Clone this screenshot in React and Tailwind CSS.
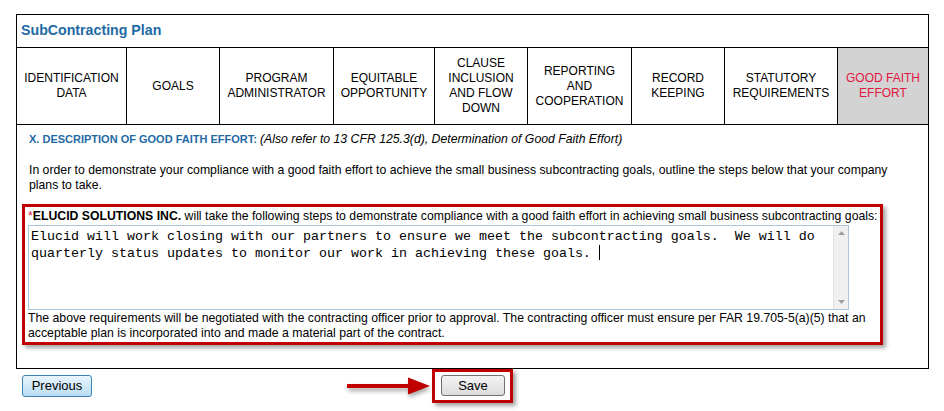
import React from 'react';

const tabs = [
  { label: ['IDENTIFICATION', 'DATA'], w: 'w-[110px]' },
  { label: ['GOALS'], w: 'w-[93px]' },
  { label: ['PROGRAM', 'ADMINISTRATOR'], w: 'w-[114px]' },
  { label: ['EQUITABLE', 'OPPORTUNITY'], w: 'w-[101px]' },
  { label: ['CLAUSE', 'INCLUSION', 'AND FLOW', 'DOWN'], w: 'w-[93px]' },
  { label: ['REPORTING', 'AND', 'COOPERATION'], w: 'w-[104px]' },
  { label: ['RECORD', 'KEEPING'], w: 'w-[93px]' },
  { label: ['STATUTORY', 'REQUIREMENTS'], w: 'w-[113px]' },
  { label: ['GOOD FAITH', 'EFFORT'], w: 'w-[90px]', active: true },
];

// fake scrollbar for the read-only text box
const ScrollBar = () => (
  <div className="w-[15px] h-full bg-[#f0f0f0] border-l border-[#e4e4e4] flex flex-col justify-between items-center py-[5px]">
    <svg width="7" height="4" viewBox="0 0 7 4"><path d="M0 4 L3.5 0 L7 4 Z" fill="#a0a0a0" /></svg>
    <svg width="7" height="4" viewBox="0 0 7 4"><path d="M0 0 L3.5 4 L7 0 Z" fill="#a0a0a0" /></svg>
  </div>
);

const Arrow = () => (
  <svg width="86" height="22" viewBox="0 0 86 22" className="drop-shadow-[1px_3px_2px_rgba(0,0,0,0.35)]">
    <rect x="0" y="9" width="64" height="4" fill="#c00000" />
    <path d="M61 2.5 L83 11 L61 19.5 Z" fill="#c00000" />
  </svg>
);

export default function App() {
  return (
    <div className="w-[944px] h-[411px] bg-white font-['Liberation_Sans',Arial,sans-serif] text-[12px] text-black overflow-hidden">
      <div className="ml-[16px] pt-[14px]">
        <div className="w-[913px] border border-black">
          {/* title */}
          <div className="h-[32px] flex items-center pl-[4px] text-[14.2px] font-bold text-[#1f6aa5]">
            SubContracting Plan
          </div>

          {/* tabs */}
          <div className="flex h-[77px] border-t border-black">
            {tabs.map((t, i) => (
              <div
                key={i}
                className={`${t.w} flex flex-col items-center justify-center text-center leading-[15px] ${
                  i < tabs.length - 1 ? 'border-r border-black' : ''
                } ${t.active ? 'bg-[#d3d3d3] text-[#e2173f]' : 'text-black'}`}
              >
                {t.label.map((l) => (
                  <span key={l}>{l}</span>
                ))}
              </div>
            ))}
          </div>

          {/* content */}
          <div className="border-t border-black pt-[7px] pb-[23px] leading-[15px] text-[12.25px]">
            <div className="pl-[12px]">
              <span className="text-[11px] font-bold text-[#1f6aa5]">X. DESCRIPTION OF GOOD FAITH EFFORT: </span>
              <span className="italic">(Also refer to 13 CFR 125.3(d), Determination of Good Faith Effort)</span>
            </div>
            <p className="pl-[12px] mt-[16px]">
              In order to demonstrate your compliance with a good faith effort to achieve the small business subcontracting goals, outline the steps below that your company
              <br />
              plans to take.
            </p>

            <div className="ml-[5px] mt-[11px] w-[861px] border-[3px] border-[#c00000] shadow-[3px_3px_4px_rgba(0,0,0,0.35)] pt-[2px] pl-[3px]">
              <div className="whitespace-nowrap">
                <span className="text-[#e2173f]">*</span>
                <span className="font-bold">ELUCID SOLUTIONS INC.</span> will take the following steps to demonstrate compliance with a good faith effort in achieving small business subcontracting goals:
              </div>
              <div className="mt-[1px] w-[821px] h-[85px] border border-[#a9c6de] flex">
                <div className="flex-1 pt-[3px] pl-[2px] font-['Liberation_Mono','Courier_New',monospace] text-[13.33px] leading-[16px] whitespace-pre">
                  Elucid will work closing with our partners to ensure we meet the subcontracting goals.  We will do
                  {'\n'}quarterly status updates to monitor our work in achieving these goals. <span className="inline-block w-px h-[15px] bg-black align-[-3px]" />
                </div>
                <ScrollBar />
              </div>
              <p className="mt-[1px] pb-[1px]">
                The above requirements will be negotiated with the contracting officer prior to approval. The contracting officer must ensure per FAR 19.705-5(a)(5) that an
                <br />
                acceptable plan is incorporated into and made a material part of the contract.
              </p>
            </div>
          </div>
        </div>
      </div>

      {/* buttons */}
      <div className="flex items-start h-[43px]">
        <button className="ml-[22px] mt-[6px] w-[70px] h-[22px] rounded-[3px] border border-[#3c83b8] bg-gradient-to-b from-[#eaf6fd] to-[#b9dcf3] text-[13px] leading-[20px] text-black">
          Previous
        </button>
        <div className="ml-[255px] mt-[6px]">
          <Arrow />
        </div>
        <div className="-ml-[1px] w-[81px] h-[34px] border-[3px] border-[#c00000] shadow-[3px_3px_4px_rgba(0,0,0,0.35)] pl-[6px] pt-[3px]">
          <button className="w-[64px] h-[21px] rounded-[3px] border border-[#707070] bg-gradient-to-b from-[#f4f4f4] to-[#dcdcdc] text-[13px] leading-[19px] text-black">
            Save
          </button>
        </div>
      </div>
    </div>
  );
}
